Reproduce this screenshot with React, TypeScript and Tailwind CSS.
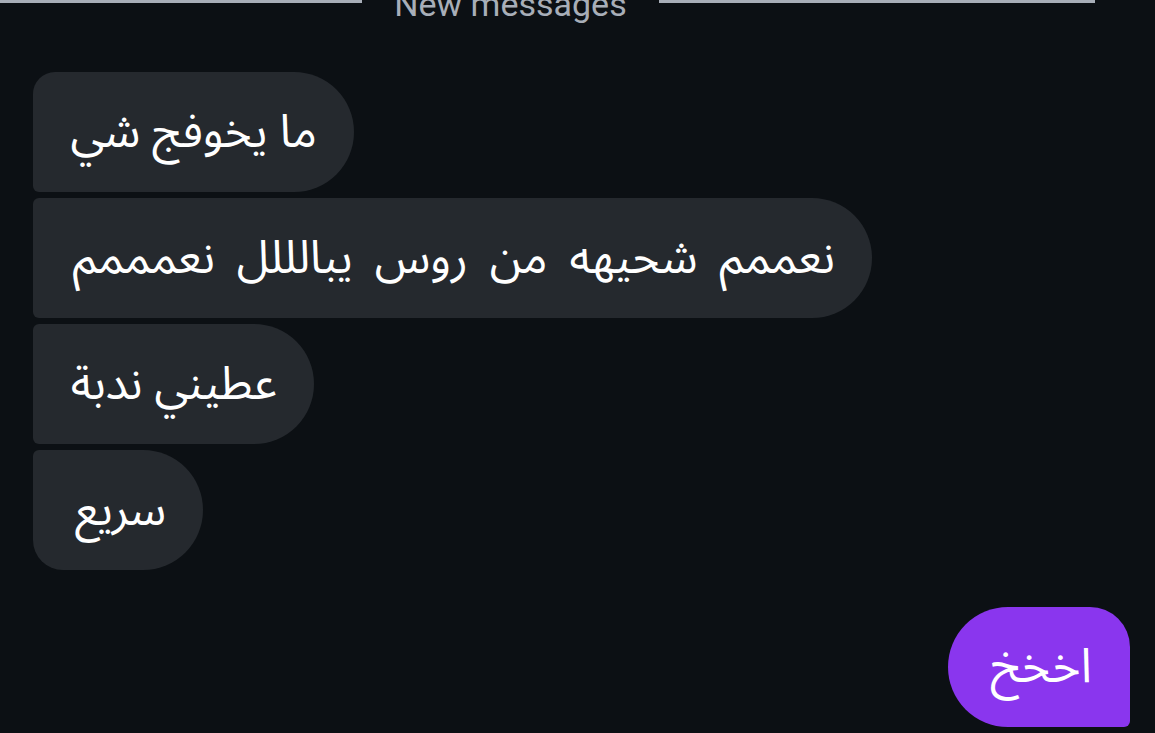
import React from "react";

const font = { fontFamily: '"Noto Sans Arabic", "Noto Sans", "DejaVu Sans", sans-serif' };

const grey = "h-[120px] flex items-center justify-start pr-[37px] bg-[#25292e] text-white text-[46px] whitespace-nowrap";

export default function App() {
  return (
    <div className="w-[1155px] h-[733px] overflow-hidden bg-[#0c1014]" style={font}>
      <div className="flex items-start h-[30px] overflow-hidden">
        <div className="w-[362px] h-[3px] bg-[#a8aeb8]" />
        <div className="w-[297px] flex justify-center">
          <span className="-mt-[16px] text-[34px] leading-[40px] text-[#a8aeb8] font-['Roboto',sans-serif]">New messages</span>
        </div>
        <div className="w-[436px] h-[3px] bg-[#a8aeb8]" />
      </div>
      <div className="flex flex-col items-start gap-[6px] pl-[33px] pr-[25px] mt-[42px]">
        <div dir="rtl" className={grey + " w-[321px] rounded-tl-[22px] rounded-bl-[6px] rounded-r-[60px]"}>ما يخوفج شي</div>
        <div dir="rtl" className={grey + " w-[839px] [word-spacing:10px] rounded-l-[6px] rounded-r-[60px]"}>نعممم شحيهه من روس يبالللل نعمممم</div>
        <div dir="rtl" className={grey + " w-[281px] rounded-l-[6px] rounded-r-[60px]"}>عطيني ندبة</div>
        <div dir="rtl" className={grey + " w-[170px] rounded-tl-[6px] rounded-bl-[30px] rounded-r-[60px]"}>سريع</div>
        <div dir="rtl" className="self-end mt-[31px] w-[182px] h-[120px] flex items-center justify-start pr-[38px] bg-[#8a36ee] text-white text-[48px] whitespace-nowrap rounded-l-[60px] rounded-tr-[40px] rounded-br-[6px]">اخخخ</div>
        <div className="self-end h-[20px] w-[182px] bg-[#8a36ee] rounded-t-[40px]" />
      </div>
    </div>
  );
}
